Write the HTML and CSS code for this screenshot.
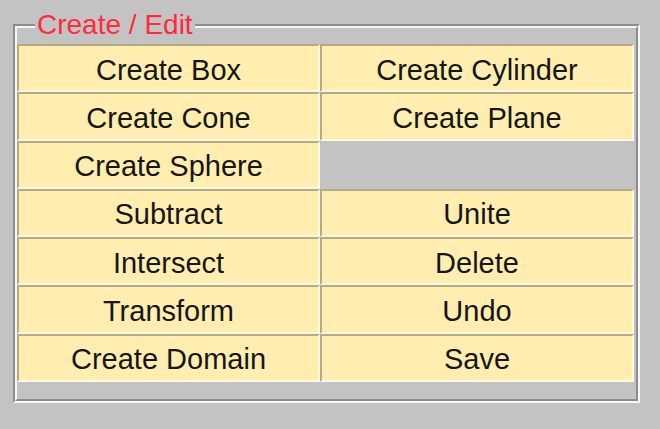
FILE: index.html
```html
<html>
<head>
<link rel="stylesheet" href="styles.css">
  <title>Create / Edit</title>
</head>
<body>
<div class="panel">
  <span class="panel-title">Create / Edit</span>
  <div class="panel-inner">
    <div class="button-grid">
      <button class="tool-btn">Create Box</button>
      <button class="tool-btn">Create Cylinder</button>
      <button class="tool-btn">Create Cone</button>
      <button class="tool-btn">Create Plane</button>
      <button class="tool-btn">Create Sphere</button>
      <div class="empty-cell"></div>
      <button class="tool-btn">Subtract</button>
      <button class="tool-btn">Unite</button>
      <button class="tool-btn">Intersect</button>
      <button class="tool-btn">Delete</button>
      <button class="tool-btn">Transform</button>
      <button class="tool-btn">Undo</button>
      <button class="tool-btn">Create Domain</button>
      <button class="tool-btn">Save</button>
    </div>
  </div>
</div>
</body>
</html>
```

FILE: styles.css
```css
/* page */
* {box-sizing: border-box;}

body {
  margin: 0;
  background-color: #c3c3c3;
  font-family: "Liberation Sans", Arial, Helvetica, sans-serif;
}

/* etched titled border */
.panel {
  position: relative;
  margin: 24px 0 0 13px;
  width: 627px;
  height: 379px;
  border-top: 2px solid #8d8d8d;
  border-left: 2px solid #8d8d8d;
  border-right: 2px solid #f7f7f7;
  border-bottom: 2px solid #f7f7f7;
}

.panel-inner {
  height: 100%;
  border-top: 2px solid #f7f7f7;
  border-left: 2px solid #f7f7f7;
  border-right: 2px solid #8d8d8d;
  border-bottom: 2px solid #8d8d8d;
  padding: 16px 2px 17px 0;
}

.panel-title {
  position: absolute;
  top: -15px;
  left: 20px;
  padding: 0 2px;
  background-color: #c3c3c3;
  color: #ff2b3b;
  font-size: 28px;
  line-height: 28px;
}

/* buttons */
.button-grid {
  display: grid;
  grid-template-columns: 303px 314px;
  grid-template-rows: repeat(7, 1fr);
  height: 100%;
}

.tool-btn {
  margin: 0;
  padding: 4px 0 0 0;
  background-color: #ffeeb0;
  border-top: 2px solid #b5aa82;
  border-left: 2px solid #b5aa82;
  border-right: 2px solid #fff9e6;
  border-bottom: 2px solid #fff9e6;
  color: #161616;
  font-family: "Liberation Sans", Arial, Helvetica, sans-serif;
  font-size: 29px;
  line-height: 29px;
}

.empty-cell {
  background-color: #c3c3c3;
}
```
